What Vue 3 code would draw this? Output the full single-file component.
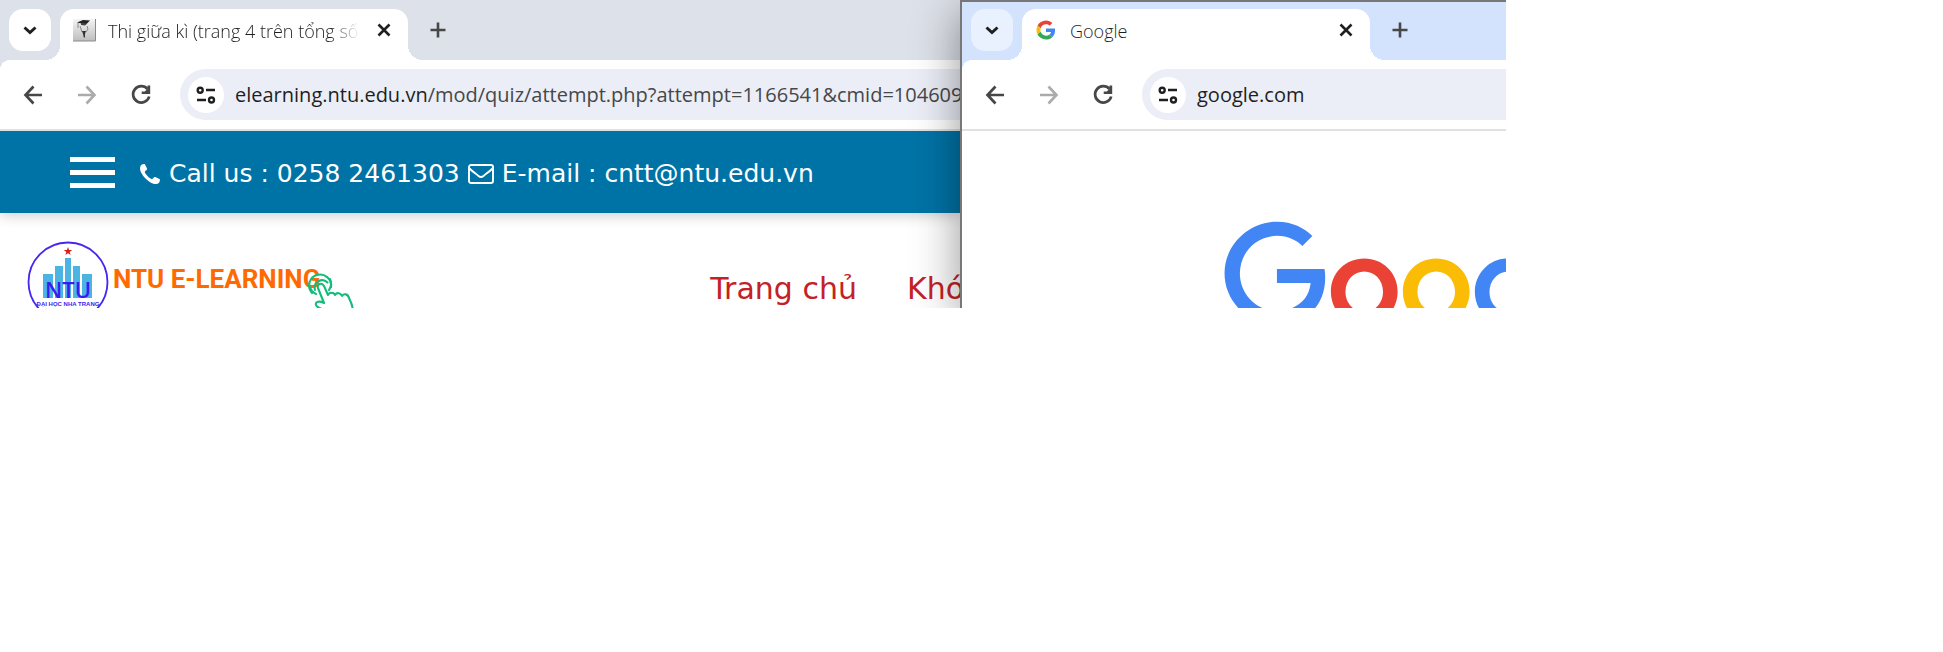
<script setup>
const windows = [
  {
    id: 'ntu',
    title: 'Thi giữa kì (trang 4 trên tổng số',
    host: 'elearning.ntu.edu.vn',
    path: '/mod/quiz/attempt.php?attempt=1166541&cmid=104609',
  },
  { id: 'google', title: 'Google', host: 'google.com', path: '' },
]
</script>

<template>
  <main class="desktop">
    <section v-for="win in windows" :key="win.id" class="window" :class="win.id">
      <div class="tabstrip">
        <button class="tab-search" aria-label="Search tabs">
          <svg viewBox="0 0 24 24" width="24" height="24"><path d="M6.500 9.500l5.500 5 5.500-5" fill="none" stroke="#1f1f1f" stroke-width="3" /></svg>
        </button>
        <div class="tab">
          <svg v-if="win.id === 'ntu'" class="favicon" viewBox="0 0 24 24" width="24" height="24">
            <defs>
              <linearGradient id="tile" x1="0" y1="0" x2="0" y2="1">
                <stop offset="0" stop-color="#f4f4f4" />
                <stop offset="1" stop-color="#bdbdbd" />
              </linearGradient>
            </defs>
            <rect x="1" y="1" width="22" height="22" rx="1" fill="url(#tile)" />
            <path d="M1 23h22.500V1" fill="none" stroke="#8a8a8a" />
            <path d="M5 4.500l6-2.500 7 .5-4 4z" fill="#222" />
            <path d="M9 5v2l4 .5 2-2" fill="#444" />
            <path d="M6 5v5M8 8l2 6M15 8l1 3-2 3" fill="none" stroke="#888" />
            <path d="M10 13h4l-1 3v3l-1 1-1-4z" fill="#333" />
          </svg>
          <svg v-else class="favicon" viewBox="0 0 48 48" width="24" height="24">
            <g transform="translate(5 5) scale(.79)">
              <path fill="#ea4335" d="M24 9.500c3.540 0 6.710 1.220 9.210 3.600l6.850-6.850C35.900 2.380 30.470 0 24 0 14.620 0 6.510 5.380 2.560 13.220l7.980 6.190C12.430 13.720 17.740 9.500 24 9.500z" />
              <path fill="#4285f4" d="M46.980 24.550c0-1.570-.15-3.090-.38-4.550H24v9.020h12.940c-.58 2.960-2.260 5.480-4.780 7.180l7.730 6c4.510-4.180 7.090-10.360 7.090-17.650z" />
              <path fill="#fbbc05" d="M10.530 28.590c-.48-1.450-.76-2.990-.76-4.590s.27-3.140.76-4.590l-7.980-6.190C.92 16.460 0 20.120 0 24s.92 7.540 2.560 10.780l7.970-6.190z" />
              <path fill="#34a853" d="M24 48c6.480 0 11.930-2.130 15.890-5.810l-7.730-6c-2.150 1.450-4.920 2.300-8.160 2.300-6.260 0-11.570-4.220-13.470-9.910l-7.980 6.190C6.510 42.620 14.620 48 24 48z" />
            </g>
          </svg>
          <span class="tab-title">{{ win.title }}</span>
          <button class="plain" aria-label="Close tab">
            <svg viewBox="0 0 24 24" width="24" height="24"><path d="M6.500 6.500l11 11M17.500 6.500l-11 11" fill="none" stroke="#1f1f1f" stroke-width="2.600" /></svg>
          </button>
        </div>
        <button class="plain new-tab" aria-label="New tab">
          <svg viewBox="0 0 24 24" width="24" height="24"><path d="M12 4.500v15M4.500 12h15" fill="none" stroke="#474747" stroke-width="2.600" /></svg>
        </button>
      </div>

      <div class="toolbar">
        <button class="plain" aria-label="Back">
          <svg viewBox="0 0 24 24" width="24" height="24"><path d="M21 12H5M12.500 3.500L4.500 12l8 8.500" fill="none" stroke="#474747" stroke-width="2.700" /></svg>
        </button>
        <button class="plain" aria-label="Forward" disabled>
          <svg viewBox="0 0 24 24" width="24" height="24"><path d="M3 12h16M11.500 3.500l8 8.500-8 8.500" fill="none" stroke="#ababab" stroke-width="2.600" /></svg>
        </button>
        <button class="plain" aria-label="Reload">
          <svg viewBox="0 0 24 24" width="24" height="24">
            <path d="M18.500 6A8.200 8.200 0 1 0 20.200 13.500" fill="none" stroke="#474747" stroke-width="2.700" />
            <path d="M18.500 2.500h2.700v8.500h-8.500V8.500h3L18.500 6z" fill="#474747" />
          </svg>
        </button>
        <div class="omnibox">
          <button class="chip" aria-label="View site information">
            <svg viewBox="0 0 20 20" width="20" height="20" fill="none" stroke="#1f1f1f" stroke-width="2.400">
              <circle cx="4.200" cy="5.200" r="2.500" />
              <path d="M10 5h9M1 15h9" />
              <circle cx="15.500" cy="15" r="2.500" />
            </svg>
          </button>
          <span class="url">{{ win.host }}<span class="path">{{ win.path }}</span></span>
        </div>
      </div>

      <div v-if="win.id === 'ntu'" class="page">
        <header class="contact">
          <button class="menu" aria-label="Menu"><i></i><i></i><i></i></button>
          <p class="contact-line">
            <svg class="phone" viewBox="0 0 22 22" width="22" height="22"><path fill="#fff" d="M21 16.500c0 .8-.4 2.300-.8 3-.8 1-2.400 1.500-3.700 1.500-1.800 0-3.700-.9-5.300-1.800C8 17.400 4.600 14 2.800 10.800 1.900 9.200 1 7.300 1 5.500c0-1.300.5-2.900 1.500-3.700C3.200 1.400 4.700 1 5.500 1c.5 0 .7 1 1 1.600l1.300 2.500c.3.600.5 1 .1 1.500C7.200 7.500 5.800 8.100 5.800 9c0 .6.8 1.700 1.200 2.200 1.200 1.600 2.200 2.600 3.800 3.800.5.400 1.600 1.200 2.200 1.200.9 0 1.500-1.400 2.400-2.100.5-.4.900-.2 1.500.1l2.500 1.300c.6.300 1.600.5 1.600 1z" /></svg>
            <span>Call us : 0258 2461303</span>
            <svg class="mail" viewBox="0 0 26 20" width="26" height="20" fill="none" stroke="#fff" stroke-width="1.900"><rect x="1" y="1" width="24" height="18" rx="2" /><path d="M1.500 4.500c3 3 6 5 9 7.500 1.500 1.200 3.500 1.200 5 0 3-2.500 6-4.500 9-7.500" /></svg>
            <span>E-mail : cntt@ntu.edu.vn</span>
          </p>
        </header>
        <div class="masthead">
          <a class="brand" href="#">
            <svg class="seal" viewBox="0 0 82 82" width="82" height="82" role="img" aria-label="NTU">
              <circle cx="41" cy="41" r="39.500" fill="#fff" stroke="#4527f0" stroke-width="1.800" />
              <path fill="#d9201c" d="M41 6l1.100 3h3.100l-2.500 1.900.9 3.100L41 12.200 38.400 14l.9-3.100L36.800 9h3.100z" />
              <g fill="#4bb4e2"><rect x="16" y="33" width="10" height="24" /><rect x="28" y="25" width="8" height="32" /><rect x="38" y="17" width="6" height="40" /><rect x="46" y="25" width="7" height="32" /><rect x="55" y="33" width="10" height="24" /></g>
              <text x="41" y="57" class="seal-mark">NTU</text>
              <text x="41" y="65" class="seal-name">ĐẠI HỌC NHA TRANG</text>
            </svg>
            <span class="brand-name">NTU E-LEARNING</span>
            <svg class="hand" viewBox="0 0 46 46" width="46" height="46" fill="none" stroke="#12bd7c" stroke-width="2.100" stroke-linecap="round" stroke-linejoin="round">
              <path d="M4 20A11 11 0 1 1 23 14M7 17A7.500 7.500 0 0 1 19.500 9.500" />
              <path d="M2 14A11 11 0 0 0 8 21M22 6A11.500 11.500 0 0 1 21 17" />
              <path d="M16 30L10 15c-1.500-4 4-6 6-2l4 9c1-3 6-3 7 0 2-3 6-2 7 1 2-3 6-2 7 2 3 6 5 11 3 21M16 30c-4-2-9-2-8 2 1 3 5 3 7 5 2 3 4 5 7 7" />
            </svg>
          </a>
          <nav class="nav"><a href="#">Trang chủ</a><a href="#">Khó</a></nav>
        </div>
      </div>

      <div v-else class="page search-page">
        <svg class="wordmark" viewBox="0 0 272 92" width="408" height="138" role="img" aria-label="Google">
          <path fill="#ea4335" d="M115.750 47.180c0 12.770-9.990 22.180-22.250 22.180s-22.250-9.410-22.250-22.180C71.250 34.320 81.240 25 93.500 25s22.250 9.320 22.250 22.180zm-9.740 0c0-7.980-5.790-13.440-12.510-13.440S80.990 39.200 80.990 47.180c0 7.900 5.790 13.440 12.510 13.440s12.510-5.550 12.510-13.440z" />
          <path fill="#fbbc05" d="M163.750 47.180c0 12.770-9.990 22.180-22.250 22.180s-22.250-9.410-22.250-22.180C119.250 34.320 129.240 25 141.500 25s22.250 9.320 22.250 22.180zm-9.740 0c0-7.980-5.790-13.440-12.510-13.440s-12.510 5.460-12.510 13.440c0 7.900 5.790 13.440 12.510 13.440s12.510-5.550 12.510-13.440z" />
          <path fill="#4285f4" d="M209.750 26.340v39.820c0 16.380-9.660 23.070-21.080 23.070-10.750 0-17.220-7.190-19.660-13.070l8.480-3.530c1.510 3.610 5.210 7.870 11.170 7.870 7.310 0 11.840-4.510 11.840-13v-3.190h-.34c-2.180 2.690-6.380 5.040-11.680 5.040-11.090 0-21.250-9.660-21.250-22.090 0-12.520 10.160-22.260 21.250-22.260 5.290 0 9.490 2.350 11.680 4.960h.34v-3.610h9.250zm-8.560 20.920c0-7.810-5.210-13.520-11.840-13.520-6.720 0-12.350 5.710-12.350 13.520 0 7.730 5.630 13.360 12.350 13.360 6.630 0 11.840-5.630 11.840-13.360z" />
          <path fill="#4285f4" d="M35.290 41.410V32H67c.31 1.640.47 3.580.47 5.680 0 7.060-1.930 15.790-8.150 22.010-6.050 6.300-13.780 9.660-24.020 9.660C16.320 69.350.36 53.890.36 34.910.36 15.930 16.320.47 35.300.47c10.500 0 17.980 4.120 23.600 9.490l-6.640 6.640c-4.030-3.780-9.490-6.720-16.970-6.720-13.860 0-24.700 11.170-24.700 25.030 0 13.860 10.840 25.030 24.700 25.030 8.990 0 14.110-3.610 17.390-6.890 2.660-2.660 4.410-6.460 5.100-11.650z" />
        </svg>
      </div>
    </section>
  </main>
</template>

<style>
body {
  margin: 0;
  background: #fff;
}
</style>

<style scoped>
.desktop {
  display: grid;
  grid-template-columns: minmax(0, 960fr) minmax(0, 546fr) minmax(0, 437fr);
  overflow: hidden;
  font-family: "Open Sans", "Noto Sans", sans-serif;
}

.window {
  --strip: #dde1e9;
  --search: #fff;
  display: flex;
  flex-direction: column;
  box-sizing: border-box;
  min-width: 0;
  background: #fff;
}

.google {
  --strip: #d3e3fd;
  --search: #e9f1fe;
  position: relative;
  border-left: 2px solid #777;
  box-shadow: 0 10px 44px rgba(0, 0, 0, 0.42);
  clip-path: inset(0 0 0 -80px);
}

.google .tabstrip {
  box-shadow: inset 0 2px #777;
}

button {
  padding: 0;
  border: 0;
  background: none;
}

svg {
  display: block;
  flex: none;
}

.tabstrip {
  display: flex;
  height: 60px;
  box-sizing: border-box;
  padding: 9px 9px 0;
  overflow: hidden;
  background: var(--strip);
}

.tab-search {
  display: grid;
  place-items: center;
  flex: none;
  width: 42px;
  height: 42px;
  border-radius: 14px;
  background: var(--search);
}

.tab {
  position: relative;
  display: flex;
  align-items: center;
  box-sizing: border-box;
  flex: 0 1 348px;
  min-width: 0;
  height: 51px;
  margin-left: 9px;
  padding: 0 12px 9px;
  border-radius: 14px 14px 0 0;
  background: #fff;
}

.tab::before,
.tab::after {
  content: "";
  position: absolute;
  bottom: 0;
  width: 15px;
  height: 15px;
}

.tab::before {
  right: 100%;
  background: radial-gradient(circle at 0 0, transparent 15px, #fff 15px);
}

.tab::after {
  left: 100%;
  background: radial-gradient(circle at 100% 0, transparent 15px, #fff 15px);
}

.tab-title {
  flex: 1;
  min-width: 0;
  margin: 0 12px;
  padding-top: 2px;
  overflow: hidden;
  font-size: 18px;
  font-weight: 300;
  line-height: 26px;
  white-space: nowrap;
  color: #1f1f1f;
}

.ntu .tab-title {
  mask-image: linear-gradient(to right, #000 88%, transparent);
}

.plain {
  flex: none;
  width: 24px;
  height: 24px;
}

.new-tab {
  margin: 9px 0 0 18px;
}

.toolbar {
  display: flex;
  align-items: center;
  gap: 30px;
  height: 71px;
  box-sizing: border-box;
  padding-left: 21px;
  border-bottom: 2px solid #e0e2e2;
  background: radial-gradient(circle at 10px 10px, #fff 10px, var(--strip) 10px) 0 0 / 10px 10px no-repeat;
}

.omnibox {
  display: flex;
  align-items: center;
  flex: 1;
  min-width: 0;
  height: 51px;
  margin-left: -3px;
  padding-left: 8px;
  box-sizing: border-box;
  border-radius: 26px 0 0 26px;
  background: #ebeef7;
}

.chip {
  display: grid;
  place-items: center;
  flex: none;
  width: 36px;
  height: 36px;
  border-radius: 50%;
  background: #fff;
}

.url {
  margin-left: 11px;
  font-size: 20px;
  line-height: 30px;
  white-space: nowrap;
  color: #1f1f1f;
}

.path {
  color: #474747;
}

.page {
  overflow: hidden;
  font-family: "DejaVu Sans", Verdana, sans-serif;
}

.contact {
  position: relative;
  display: flex;
  align-items: center;
  height: 82px;
  padding-left: 70px;
  background: #0073a6;
  box-shadow: 0 3px 12px rgba(0, 0, 0, 0.18);
}

.menu {
  display: grid;
  flex: none;
  gap: 8px;
  width: 45px;
}

.menu i {
  height: 5px;
  background: #fff;
}

.contact-line {
  display: flex;
  align-items: center;
  gap: 8px;
  margin: 4px 0 0 24px;
  font-size: 25px;
  line-height: 32px;
  white-space: nowrap;
  color: #fff;
}

.masthead {
  display: flex;
  justify-content: space-between;
  height: 95px;
  overflow: hidden;
}

.brand {
  display: flex;
  align-items: flex-start;
  margin: 28px 0 0 27px;
  color: #ff6a00;
  text-decoration: none;
}

.brand-name {
  margin: 20px 0 0 4px;
  font: bold 26px/36px Roboto, "Liberation Sans", sans-serif;
  white-space: nowrap;
}

.hand {
  margin: 32px 0 0 -12px;
}

.seal-mark {
  font: 600 22px "Open Sans", sans-serif;
  text-anchor: middle;
  fill: #3a1cf0;
}

.seal-name {
  font: bold 6px "Liberation Sans", sans-serif;
  text-anchor: middle;
  fill: #3a1cf0;
}

.nav {
  display: flex;
  gap: 50px;
  margin: 58px -4px 0 0;
  font-size: 30px;
  line-height: 36px;
  white-space: nowrap;
}

.nav a {
  color: #c42127;
  text-decoration: none;
}

.search-page {
  height: 177px;
  box-sizing: border-box;
  padding: 90px 0 0 262px;
}
</style>
